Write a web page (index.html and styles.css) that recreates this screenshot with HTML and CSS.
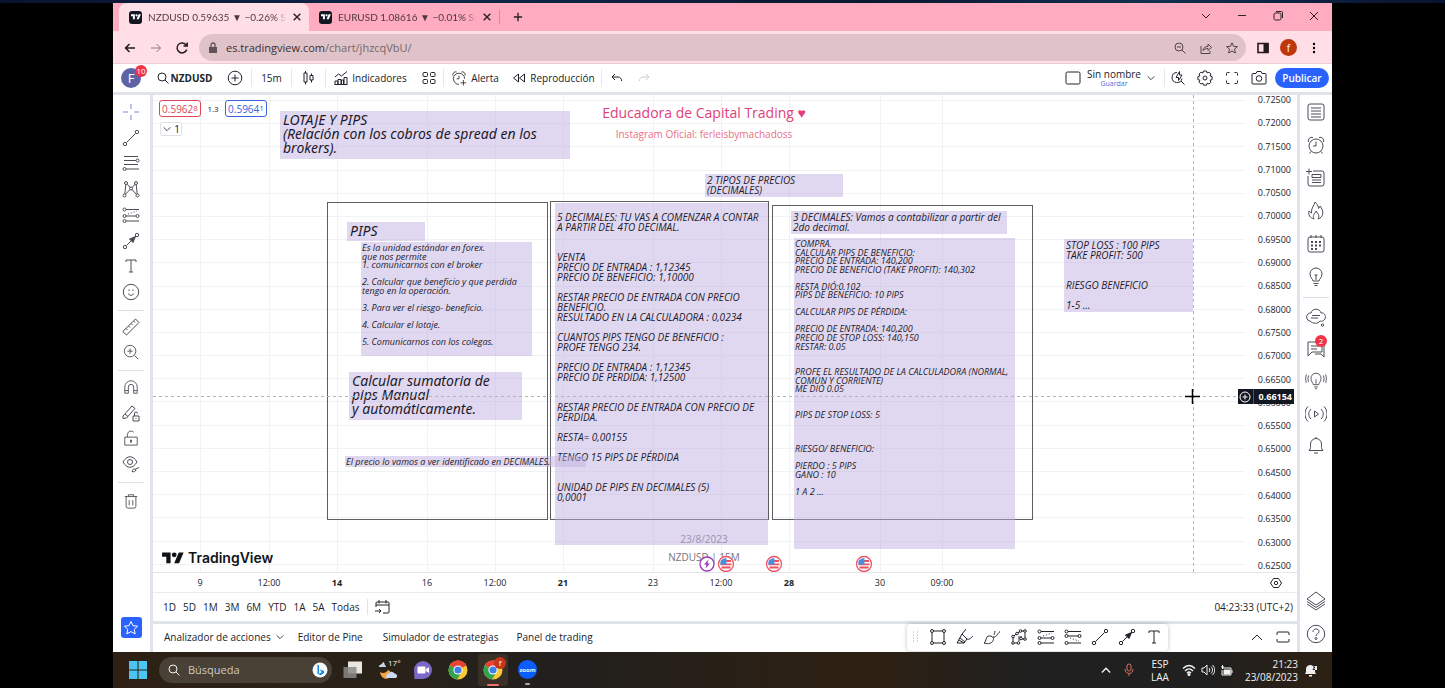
FILE: index.html
```html
<!DOCTYPE html>
<html lang="es">
<head>
<meta charset="utf-8">
<title>NZDUSD 0.59635 ▼ −0.26% Sin nombre</title>
<link rel="stylesheet" href="styles.css">
</head>
<body>
<svg class="defs" aria-hidden="true">
  <symbol id="tv" viewBox="0 0 36 28"><path fill="currentColor" d="M14 22H7V11H0V4h14v18zM28 22h-8l7.500-18h8L28 22z"/><circle cx="20" cy="8" r="4" fill="currentColor"/></symbol>
  <symbol id="x" viewBox="0 0 12 12"><path d="M2 2l8 8M10 2l-8 8"/></symbol>
  <symbol id="down" viewBox="0 0 12 12"><path d="M2 4l4 4 4-4"/></symbol>
  <symbol id="up" viewBox="0 0 12 12"><path d="M1 9l5-5 5 5"/></symbol>
  <symbol id="plus" viewBox="0 0 12 12"><path d="M6 1v10M1 6h10"/></symbol>
  <symbol id="search" viewBox="0 0 12 12"><circle cx="5" cy="5" r="4"/><path d="M8 8l3.500 3.500"/></symbol>
  <symbol id="line" viewBox="0 0 18 18"><circle cx="3" cy="15" r="1.700"/><circle cx="15" cy="3" r="1.700"/><path d="M4.500 13.500l9-9"/></symbol>
  <symbol id="arrow" viewBox="0 0 18 18"><circle cx="3" cy="15" r="1.700"/><circle cx="15" cy="3" r="1.700"/><path d="M4.500 13.500l9-9"/><path d="M13.500 4.500l-6 2.500 3.500 3.500z" fill="currentColor"/></symbol>
  <symbol id="text" viewBox="0 0 18 18"><path d="M4 5V3h10v2M9 3v12M7 15h4"/></symbol>
  <symbol id="longpos" viewBox="0 0 18 18"><circle cx="2.500" cy="3.500" r="1.500"/><path d="M4 3.500h13M4 10h10M4 15h13"/><circle cx="15.500" cy="10" r="1.500"/><circle cx="2.500" cy="10" r="1.500"/><circle cx="2.500" cy="15" r="1.500"/><path d="M6 8l9-3" stroke-dasharray="1 2"/></symbol>
  <symbol id="shortpos" viewBox="0 0 18 18"><circle cx="2.500" cy="3.500" r="1.500"/><path d="M4 3.500h13M4 8h10M4 15h13"/><circle cx="15.500" cy="8" r="1.500"/><circle cx="2.500" cy="8" r="1.500"/><circle cx="2.500" cy="15" r="1.500"/><path d="M6 10l9 3" stroke-dasharray="1 2"/></symbol>
  <symbol id="bulb" viewBox="0 0 20 20"><path d="M7 14c0-2-3-3-3-7a6 6 0 0 1 12 0c0 4-3 5-3 7zM7.500 16.500h5M8.500 18.500h3M10 13V8M8.500 8h3"/></symbol>
  <symbol id="clock" viewBox="0 0 20 20"><circle cx="10" cy="11" r="7"/><path d="M10 6.500V11H7M2.500 7A3.500 3.500 0 0 1 7 2.500M17.500 7A3.500 3.500 0 0 0 13 2.500M5 16.500L3.500 18.500M15 16.500l1.500 2"/></symbol>
  <symbol id="flag" viewBox="0 0 18 18"><circle cx="9" cy="9" r="7.500" fill="#fff" stroke="#ef5362" stroke-width="1.300"/><path d="M4 6h10M3.500 9.300h11M4.500 12.500h9" stroke="#f0505c" stroke-width="1.800"/><path d="M3.300 9.500V7A6 6 0 0 1 9.500 3.200v6.300z" fill="#4a90e2" stroke="none"/></symbol>
  <symbol id="chrome" viewBox="0 0 20 20"><g stroke="none"><circle cx="10" cy="10" r="9.500" fill="#fcc934"/><path d="M10 10L1.800 5.200A9.500 9.500 0 0 1 18.300 5.500z" fill="#e94235"/><path d="M1.800 5.200A9.500 9.500 0 0 0 9 19.500L13.500 12z" fill="#34a350"/><circle cx="10" cy="10" r="4.600" fill="#fff"/><circle cx="10" cy="10" r="3.600" fill="#3f7fe8"/></g></symbol>
</svg>

<div class="wallpaper"></div>
<div class="screen">
  <div class="tabs">
    <div class="tab active"><span class="favicon"><svg><use href="#tv"/></svg></span><span class="tab-title">NZDUSD 0.59635 ▼ −0.26% Sin nombre</span><button aria-label="Cerrar pestaña"><svg class="ic i10 bold"><use href="#x"/></svg></button></div>
    <div class="tab"><span class="favicon"><svg><use href="#tv"/></svg></span><span class="tab-title">EURUSD 1.08616 ▼ −0.01% Sin nombre</span><button aria-label="Cerrar pestaña"><svg class="ic i10 bold"><use href="#x"/></svg></button></div>
    <button class="newtab" aria-label="Nueva pestaña"><svg class="ic i10 bold"><use href="#plus"/></svg></button>
    <div class="winctl">
      <button aria-label="Buscar pestañas"><svg class="ic i12"><use href="#down"/></svg></button>
      <button aria-label="Minimizar"><svg class="ic i12" viewBox="0 0 12 12"><path d="M2 5.500h8"/></svg></button>
      <button aria-label="Restaurar"><svg class="ic i12" viewBox="0 0 12 12"><rect x="2" y="3" width="7" height="7" rx="1.500"/><path d="M4 1.500h5.500a1 1 0 0 1 1 1V8"/></svg></button>
      <button aria-label="Cerrar"><svg class="ic i12"><use href="#x"/></svg></button>
    </div>
  </div>
  <div class="navbar">
    <button aria-label="Atrás"><svg class="ic i12 strong" viewBox="0 0 12 12"><path d="M11 6H1.500M5.500 2l-4 4 4 4"/></svg></button>
    <button class="dim" aria-label="Adelante"><svg class="ic i12" viewBox="0 0 12 12"><path d="M1 6h9.500M6.500 2l4 4-4 4"/></svg></button>
    <button aria-label="Recargar"><svg class="ic i14 strong" viewBox="0 0 14 14"><path d="M11.800 8.500A5 5 0 1 1 11 3.800L12 5M12.200 1.500V5H8.500"/></svg></button>
    <div class="omnibox">
      <svg class="lock" viewBox="0 0 10 12"><path d="M1 5h8v6H1z" fill="#60525a"/><path d="M3 5V3a2 2 0 0 1 4 0v2" fill="none" stroke="#60525a" stroke-width="1.300"/></svg>
      <div class="url"><input id="url" aria-label="Dirección"><label class="url-text" for="url"><b>es.tradingview.com</b>/chart/jhzcqVbU/</label></div>
      <button aria-label="Zoom"><svg class="ic i12" viewBox="0 0 12 12"><circle cx="5" cy="5" r="4"/><path d="M8 8l3.500 3.500M3 5h4"/></svg></button>
      <button aria-label="Compartir"><svg class="ic i12" viewBox="0 0 12 12"><path d="M1 4v7.500h9V9M3 8.500c.5-3 2-4 5-4v-2.500L11.500 5.500 8 8.500v-2C5.500 6.500 4.500 7 3 8.500z"/></svg></button>
      <button aria-label="Favorito"><svg class="ic i12" viewBox="0 0 12 12"><path d="M6 .8l1.600 3.500 3.800.4-2.900 2.500.9 3.800L6 9l-3.400 2 .9-3.800L.6 4.700l3.800-.4z"/></svg></button>
    </div>
    <button aria-label="Panel lateral"><svg class="ic i12" viewBox="0 0 12 12"><path d="M1 1.500h10v9H1z" stroke-width="1.600"/><path d="M7 1.500h4v9H7z" fill="currentColor"/></svg></button>
    <button class="profile">f</button>
    <button aria-label="Menú"><svg class="i12" viewBox="0 0 12 12"><circle cx="6" cy="2" r="1.200"/><circle cx="6" cy="6" r="1.200"/><circle cx="6" cy="10" r="1.200"/></svg></button>
  </div>

  <header class="topbar">
    <div class="tools-left">
      <button class="user">F<span class="badge">10</span></button>
      <button class="symbol"><svg class="ic i12"><use href="#search"/></svg>NZDUSD</button>
      <button aria-label="Comparar"><svg class="ic i16" viewBox="0 0 16 16"><circle cx="8" cy="8" r="6.800"/><path d="M8 4.500v7M4.500 8h7"/></svg></button>
      <button class="sep">15m</button>
      <button class="sep" aria-label="Velas"><svg class="ic i14" viewBox="0 0 14 14"><path d="M3.500 0v2M2 2h3v9H2zM3.500 11v2.500M9.500 2.500v2M8 4.500h3V9H8zM9.500 9v2.500"/></svg></button>
      <button class="sep"><svg class="ic i14" viewBox="0 0 14 14"><path d="M1 13.500V10h3v3.500M4 13V8.500h3V13M7.500 13V9h2v4M10 13V6.500h3V13M.5 13.500h13M1 6l3.500-3 3 2L13 .5"/></svg>Indicadores</button>
      <button aria-label="Plantillas"><svg class="ic i14" viewBox="0 0 14 14"><rect x="1" y="1.500" width="4.500" height="4" rx="1"/><rect x="8.500" y="1.500" width="4.500" height="4" rx="1"/><rect x="1" y="8.500" width="4.500" height="4" rx="1"/><rect x="8.500" y="8.500" width="4.500" height="4" rx="1"/></svg></button>
      <button class="sep"><svg class="ic i16" viewBox="0 0 20 20"><path d="M10 18a7 7 0 1 1 7-7M10 7v4H7M2.500 7A3.500 3.500 0 0 1 7 2.500M17.500 7A3.500 3.500 0 0 0 13 2.500M15.500 12.500v7M12 16h7"/></svg>Alerta</button>
      <button><svg class="ic i14" viewBox="0 0 14 14"><path d="M6.500 3v8L1.500 7zM12.500 3v8L7.500 7z"/></svg>Reproducción</button>
      <button class="sep" aria-label="Deshacer"><svg class="ic i12" viewBox="0 0 12 12"><path d="M4 2L1 5l3 3M1 5h6a3.500 3.500 0 0 1 3.500 4"/></svg></button>
      <button class="faint" aria-label="Rehacer"><svg class="ic i12" viewBox="0 0 12 12"><path d="M8 2l3 3-3 3M11 5H5a3.500 3.500 0 0 0-3.500 4"/></svg></button>
    </div>
    <div class="tools-right">
      <button aria-label="Diseño"><svg class="ic i16" viewBox="0 0 16 16"><rect x="1" y="2" width="14" height="12" rx="1.500"/></svg></button>
      <button class="layout-name"><span>Sin nombre</span><small>Guardar</small></button>
      <button class="more" aria-label="Más"><svg class="ic i10"><use href="#down"/></svg></button>
      <button class="sep" aria-label="Búsqueda rápida"><svg class="ic i14" viewBox="0 0 14 14"><path d="M6 1.500a5 5 0 1 0 5 6M10 10l3.500 3.500M8.500.5L5 6.500h2.500V9.500L11 4H8.500z"/></svg></button>
      <button aria-label="Ajustes"><svg class="ic i16" viewBox="0 0 16 16"><path d="M6.500 1h3l.6 2 2-.8 1.800 1.800-.8 2 2 .6v3l-2 .6.8 2-1.800 1.800-2-.8-.6 2h-3l-.6-2-2 .8-1.800-1.800.8-2-2-.6v-3l2-.6-.8-2 1.800-1.800 2 .8z"/><circle cx="8" cy="8" r="2"/></svg></button>
      <button aria-label="Pantalla completa"><svg class="ic i14" viewBox="0 0 14 14"><path d="M1.500 4.500v-2a1 1 0 0 1 1-1h2M9.500 1.500h2a1 1 0 0 1 1 1v2M12.500 9.500v2a1 1 0 0 1-1 1h-2M4.500 12.500h-2a1 1 0 0 1-1-1v-2"/></svg></button>
      <button aria-label="Captura"><svg class="ic i16" viewBox="0 0 16 16"><path d="M2 3.500h3l1-2h4l1 2h3a1 1 0 0 1 1 1V13a1 1 0 0 1-1 1H2a1 1 0 0 1-1-1V4.500a1 1 0 0 1 1-1z"/><circle cx="8" cy="8.500" r="2.800"/></svg></button>
      <button class="publish">Publicar</button>
    </div>
  </header>

  <div class="workspace">
    <nav class="drawbar">
      <div class="group g8">
        <button class="cross" aria-label="Cursor"><svg class="ic i18" viewBox="0 0 18 18"><path d="M9 1v5M9 12v5M1 9h5M12 9h5"/></svg></button>
        <button aria-label="Línea"><svg class="ic i18"><use href="#line"/></svg></button>
        <button aria-label="Fibonacci"><svg class="ic i18" viewBox="0 0 18 18"><path d="M2 2.500h14M2 6.500h12M2 10.500h14M4 15h13"/><circle cx="15.500" cy="6.500" r="1.500"/><circle cx="2.500" cy="15" r="1.500"/></svg></button>
        <button aria-label="Patrones"><svg class="ic i18" viewBox="0 0 18 18"><circle cx="4" cy="3" r="1.500"/><circle cx="14" cy="3" r="1.500"/><circle cx="9" cy="8.500" r="1.500"/><circle cx="2.500" cy="15.500" r="1.500"/><circle cx="15.500" cy="15.500" r="1.500"/><path d="M3.800 4.500l-1 9.500M5 4.200l3 3M10.200 7.500L13 4.200M14.200 4.500l1 9.500M3.500 14.200L8 9.500M10 9.500l4.500 5"/></svg></button>
        <button aria-label="Predicción"><svg class="ic i18"><use href="#longpos"/></svg></button>
        <button aria-label="Flecha"><svg class="ic i18"><use href="#arrow"/></svg></button>
        <button aria-label="Texto"><svg class="ic i18"><use href="#text"/></svg></button>
        <button aria-label="Iconos"><svg class="ic i18" viewBox="0 0 18 18"><circle cx="9" cy="9" r="7.700"/><path d="M6.500 10.500c.5 2.500 4.500 2.500 5 0M7 6.500v1.500M11 6.500v1.500"/></svg></button>
      </div>
      <div class="group g2">
        <button aria-label="Medir"><svg class="ic i18" viewBox="0 0 18 18"><path d="M.8 13.500L13.500 1 17 4.500 4.500 17zM4 10.500l1.500 1.500M6.500 8L8 9.500M9 5.500L10.500 7M11.500 3L13 4.500"/></svg></button>
        <button aria-label="Acercar"><svg class="ic i16" viewBox="0 0 18 18"><circle cx="8" cy="8" r="6.500"/><path d="M13 13l4 4M8 5v6M5 8h6"/></svg></button>
      </div>
      <div class="group g4">
        <button aria-label="Imán"><svg class="ic i16" viewBox="0 0 18 18"><path d="M2 16V9a7 7 0 0 1 14 0v7h-4V9a3 3 0 0 0-6 0v7zM2 13h4M12 13h4"/></svg></button>
        <button aria-label="Modo dibujo"><svg class="ic i18" viewBox="0 0 18 18"><path d="M1 12L10 2l3 2.500L4.500 14 1 14.500zM3 10l3 2.500M11 12h6v5h-6zM12.500 12V9.500a1.500 1.500 0 0 1 3 0M14 14v1"/></svg></button>
        <button aria-label="Bloquear"><svg class="ic i16" viewBox="0 0 18 18"><path d="M2 8h14v9H2zM5 8V5a4 4 0 0 1 7-2.500"/><path d="M9 11v3" stroke-width="2"/></svg></button>
        <button aria-label="Ocultar"><svg class="ic i18" viewBox="0 0 18 18"><path d="M1 7c4-7 10-7 14 0-4 7-10 7-14 0zM10 16.500c1-3 2-3 4-1.500-1 2-2 2-4 1.500zM13 14.500l4-2"/><circle cx="8" cy="7" r="2.500"/></svg></button>
      </div>
      <div class="group g1">
        <button aria-label="Eliminar"><svg class="ic i16" viewBox="0 0 18 18"><path d="M2 4h14M6 4V2h6v2M3.500 4v11a2 2 0 0 0 2 2h7a2 2 0 0 0 2-2V4M7 8v6M11 8v6"/></svg></button>
      </div>
      <button class="fav" aria-label="Favoritos"><svg class="ic i16" viewBox="0 0 16 16"><path d="M8 1.500l2 4.200 4.600.5-3.400 3.100 1 4.600L8 11.600l-4.200 2.300 1-4.600L1.400 6.200 6 5.700z"/></svg></button>
    </nav>

    <main class="center">
      <section class="chart">
        <div class="plot">
          <div class="hgrid"><i></i><i></i><i></i><i></i><i></i><i></i><i></i><i></i><i></i><i></i><i></i><i></i><i></i><i></i><i></i><i></i><i></i><i></i><i></i><i></i><i></i></div>
          <svg class="vgrid" aria-hidden="true"><path d="M47.500 0v600M116.500 0v600M184.500 0v600M274.500 0v600M342.500 0v600M410.500 0v600M500.500 0v600M568.500 0v600M636.500 0v600M727.500 0v600M789.500 0v600"/></svg>

          <div class="quote"><button class="sell">0.5962<small>8</small></button><span>1.3</span><button class="buy">0.5964<small>1</small></button></div>
          <button class="collapse"><svg class="ic i10"><use href="#down"/></svg>1</button>
          <div class="heading">Educadora de Capital Trading ♥</div>
          <div class="subheading">Instagram Oficial: ferleisbymachadoss</div>
          <div class="stamp date">23/8/2023</div>
          <div class="stamp pair">NZDUSD | 15M</div>

          <div class="box b1"></div><div class="box b2"></div><div class="box b3"></div>

          <div class="note large n-title">LOTAJE Y PIPS
(Relación con los cobros de spread en los
brokers).</div>
          <div class="note large n-pips">PIPS</div>
          <div class="note small n-list">Es la unidad estándar en forex.
que nos permite
1. comunicarnos con el broker

2. Calcular que beneficio y que perdida
tengo en la operación.

3. Para ver el riesgo- beneficio.

4. Calcular el lotaje.

5. Comunicarnos con los colegas.</div>
          <div class="note large n-sum">Calcular sumatoria de
pips Manual
y automáticamente.</div>
          <div class="note medium n-types">2 TIPOS DE PRECIOS
(DECIMALES)</div>
          <div class="note medium n-five">5 DECIMALES: TU VAS A COMENZAR A CONTAR
A PARTIR DEL 4TO DECIMAL.


VENTA
PRECIO DE ENTRADA : 1,12345
PRECIO DE BENEFICIO: 1,10000

RESTAR PRECIO DE ENTRADA CON PRECIO
BENEFICIO.
RESULTADO EN LA CALCULADORA : 0,0234

CUANTOS PIPS TENGO DE BENEFICIO :
PROFE TENGO 234.

PRECIO DE ENTRADA : 1,12345
PRECIO DE PERDIDA: 1,12500


RESTAR PRECIO DE ENTRADA CON PRECIO DE
PÉRDIDA.

RESTA= 0,00155

TENGO 15 PIPS DE PÉRDIDA


UNIDAD DE PIPS EN DECIMALES (5)
0,0001</div>
          <div class="note small n-price">El precio lo vamos a ver identificado en DECIMALES.</div>
          <div class="note medium n-three">3 DECIMALES: Vamos a contabilizar a partir del
2do decimal.</div>
          <div class="note small n-buy">COMPRA.
CALCULAR PIPS DE BENEFICIO:
PRECIO DE ENTRADA: 140,200
PRECIO DE BENEFICIO (TAKE PROFIT): 140,302

RESTA DIÓ:0.102
PIPS DE BENEFICIO: 10 PIPS

CALCULAR PIPS DE PÉRDIDA:

PRECIO DE ENTRADA: 140,200
PRECIO DE STOP LOSS: 140,150
RESTAR: 0.05


PROFE EL RESULTADO DE LA CALCULADORA (NORMAL,
COMÚN Y CORRIENTE)
ME DIÓ 0.05


PIPS DE STOP LOSS: 5



RIESGO/ BENEFICIO:

PIERDO : 5 PIPS
GANO : 10

1 A 2 ...</div>
          <div class="note medium n-stop">STOP LOSS : 100 PIPS
TAKE PROFIT: 500


RIESGO BENEFICIO

1-5 ...</div>

          <div class="brand"><svg><use href="#tv"/></svg>TradingView</div>
          <svg class="event e1" viewBox="0 0 18 18"><circle cx="9" cy="9" r="7" fill="#fff" stroke="#9c36b5" stroke-width="1.300"/><path d="M10.500 4.500L6 9.500h2.500l-1 4L12 8.500H9.500z" fill="#9c36b5"/></svg>
          <svg class="event e2"><use href="#flag"/></svg>
          <svg class="event e3"><use href="#flag"/></svg>
          <svg class="event e4"><use href="#flag"/></svg>
          <svg class="crosshair" aria-hidden="true"><path d="M0 301.500h1200M1040.500 0v600"/></svg>
          <svg class="pointer" viewBox="0 0 15 15"><path d="M7.500 0v15M0 7.500h15" stroke="#000" stroke-width="1.500"/></svg>
        </div>
        <div class="prices"><span>0.72500</span><span>0.72000</span><span>0.71500</span><span>0.71000</span><span>0.70500</span><span>0.70000</span><span>0.69500</span><span>0.69000</span><span>0.68500</span><span>0.68000</span><span>0.67500</span><span>0.67000</span><span>0.66500</span><span>0.66000</span><span>0.65500</span><span>0.65000</span><span>0.64500</span><span>0.64000</span><span>0.63500</span><span>0.63000</span><span>0.62500</span>
          <div class="cursor-price"><button aria-label="Añadir"><svg class="ic i12" viewBox="0 0 12 12"><circle cx="6" cy="6" r="5"/><path d="M6 3.500v5M3.500 6h5"/></svg></button><b>0.66154</b></div>
        </div>
      </section>
      <div class="times">
        <span class="t1">9</span><span class="t2">12:00</span><b class="t3">14</b><span class="t4">16</span><span class="t5">12:00</span><b class="t6">21</b><span class="t7">23</span><span class="t8">12:00</span><b class="t9">28</b><span class="t10">30</span><span class="t11">09:00</span>
        <button aria-label="Ajustes de escala"><svg class="ic i12" viewBox="0 0 12 12"><path d="M3.500 1.500h5L11.500 6l-3 4.500h-5L.5 6z"/><circle cx="6" cy="6" r="1.700"/></svg></button>
      </div>
      <div class="ranges">
        <button>1D</button><button>5D</button><button>1M</button><button>3M</button><button>6M</button><button>YTD</button><button>1A</button><button>5A</button><button>Todas</button>
        <button class="goto" aria-label="Ir a fecha"><svg class="ic i16" viewBox="0 0 16 16"><path d="M2 8V4a1 1 0 0 1 1-1h11a1 1 0 0 1 1 1v9a1 1 0 0 1-1 1h-5M2 6h13M5 1v3.500M12 1v3.500M1 12h6M5 10l2 2-2 2"/></svg></button>
        <button class="utc">04:23:33 (UTC+2)</button>
      </div>
      <footer class="panels">
        <button class="p1">Analizador de acciones <svg class="ic i10"><use href="#down"/></svg></button><button class="p2">Editor de Pine</button><button class="p3">Simulador de estrategias</button><button class="p4">Panel de trading</button>
        <div class="favbar">
          <svg class="grip" viewBox="0 0 8 12"><path d="M1 1h1M5 1h1M1 4h1M5 4h1M1 7h1M5 7h1M1 10h1M5 10h1" stroke="#aaa"/></svg>
          <button aria-label="Rectángulo"><svg class="ic i18" viewBox="0 0 18 18"><path d="M4.500 3h9M4.500 15h9M3 4.500v9M15 4.500v9"/><circle cx="3" cy="3" r="1.500"/><circle cx="15" cy="3" r="1.500"/><circle cx="3" cy="15" r="1.500"/><circle cx="15" cy="15" r="1.500"/></svg></button>
          <button aria-label="Resaltador"><svg class="ic i18" viewBox="0 0 18 18"><path d="M1 15l5-9 5 5-3 4zM6 6l4-5M11 11c2 1 4-1 6-3M4 10l5 4M3 12l5 3"/></svg></button>
          <button aria-label="Pincel"><svg class="ic i18" viewBox="0 0 18 18"><path d="M1 15c3-2 1-7 5.500-7 4 0 5 3 3 5.500S4 16 1 15zM10 9c3 1 4-3 7-5.500M12 3c0 2-1 3-1 4"/></svg></button>
          <button aria-label="Trazo"><svg class="ic i18" viewBox="0 0 18 18"><path d="M3 13.500V9M4 8l2-2M8 5l2-1.500M11.500 3h2.500M15 4.500v5M14 11h-2M11 9.500V8M9 8v5M4.500 15H7"/><circle cx="3" cy="8.500" r="1.300"/><circle cx="7" cy="5.500" r="1.300"/><circle cx="10.500" cy="3" r="1.300"/><circle cx="15" cy="3" r="1.300"/><circle cx="15" cy="11" r="1.300"/><circle cx="11" cy="10.500" r="1.300"/><circle cx="8.500" cy="15" r="1.300"/><circle cx="3" cy="15" r="1.300"/></svg></button>
          <button aria-label="Posición larga"><svg class="ic i18"><use href="#longpos"/></svg></button>
          <button aria-label="Posición corta"><svg class="ic i18"><use href="#shortpos"/></svg></button>
          <button aria-label="Línea"><svg class="ic i18"><use href="#line"/></svg></button>
          <button aria-label="Flecha"><svg class="ic i18"><use href="#arrow"/></svg></button>
          <button aria-label="Texto"><svg class="ic i18"><use href="#text"/></svg></button>
        </div>
        <button aria-label="Abrir panel"><svg class="ic i12"><use href="#up"/></svg></button>
        <button aria-label="Maximizar panel"><svg class="ic i14" viewBox="0 0 14 14"><path d="M1 5V3a1 1 0 0 1 1-1h10a1 1 0 0 1 1 1v2M1 9v2a1 1 0 0 0 1 1h10a1 1 0 0 0 1-1V9"/></svg></button>
      </footer>
    </main>

    <aside class="widgets">
      <div class="group w6">
        <button aria-label="Lista"><svg class="ic i20" viewBox="0 0 20 20"><rect x="2" y="2" width="16" height="16" rx="2"/><path d="M5 6h10M5 9h10M5 12h10M5 15h10"/></svg></button>
        <button aria-label="Alertas"><svg class="ic i20"><use href="#clock"/></svg></button>
        <button aria-label="Noticias"><svg class="ic i20" viewBox="0 0 20 20"><path d="M7 3h9a2 2 0 0 1 2 2v11a2 2 0 0 1-2 2H4a2 2 0 0 1-2-2V8M3 .5v6M0 3.500h6M6 14.500h9M6 12h9M6 6.500h9v3H6z"/></svg></button>
        <button aria-label="Populares"><svg class="ic i20" viewBox="0 0 20 20"><path d="M8 18c-4-1-6-4-5-8 1 1 1.500 1.500 2.500 2C5 7 8 5 9 1c2 2 3.500 4 3.500 6.500 1-.5 1.500-1.500 1.500-2.500 4 5 4 11-2 13 2-4 0-5-2-8-1 3-4 4-2 8z"/></svg></button>
        <button aria-label="Calendario"><svg class="ic i20" viewBox="0 0 20 20"><rect x="2" y="3" width="16" height="15" rx="2"/><path d="M5 1v3M10 1v3M15 1v3"/><path d="M5 8h10M5 11.500h10M5 15h7" stroke-width="2" stroke-dasharray="2 2"/></svg></button>
        <button aria-label="Ideas"><svg class="ic i20"><use href="#bulb"/></svg></button>
      </div>
      <div class="group w5">
        <button aria-label="Chats"><svg class="ic i22" viewBox="0 0 22 20"><path d="M5 14a4 4 0 0 1-2-7c1-1 2-1 3-1 1-5 9-5 10 0 4-1 6 5 3 7-2 2-3 1-4 1-2 3-7 3-10 0zM7 8.500h8M6 11h7"/><circle cx="17.500" cy="18" r="1.200"/></svg></button>
        <button class="has-badge" aria-label="Mensajes"><svg class="ic i20" viewBox="0 0 20 20"><path d="M2 3h14v10H6l-4 4zM5 7h8M5 10h6M18 6v12l-3-3H9"/></svg><span class="badge">2</span></button>
        <button aria-label="Ideas en vivo"><svg class="ic i22" viewBox="0 0 24 20"><path d="M9 14c0-2-2.500-3-2.500-7a5.500 5.500 0 0 1 11 0c0 4-2.500 5-2.500 7zM10 16.500h4M11 18.500h2M12 13V8M4 4c-1 2-1 5 0 7M1.500 3c-1 3-1 6 0 9M20 4c1 2 1 5 0 7M22.500 3c1 3 1 6 0 9"/></svg></button>
        <button aria-label="Emisiones"><svg class="ic i22" viewBox="0 0 22 20"><path d="M9.500 7v6l4-3zM6 5c-3 3-3 7 0 10M3 2.500c-4 4-4 11 0 15M16 5c3 3 3 7 0 10M19 2.500c4 4 4 11 0 15"/></svg></button>
        <button aria-label="Notificaciones"><svg class="ic i20" viewBox="0 0 20 20"><path d="M3 14.500h14c-2-2-1.500-4-1.500-6.500a5.500 5.500 0 0 0-11 0c0 2.500.5 4.500-1.500 6.500zM8 17h4M10 2.500V1"/></svg></button>
      </div>
      <div class="bottom">
        <button aria-label="Capas"><svg class="ic i20" viewBox="0 0 20 20"><path d="M10 1l9 7-9 6-9-6zM1 10.500l9 6 9-6M1 13l9 6 9-6"/></svg></button>
        <button aria-label="Ayuda"><svg class="ic i20" viewBox="0 0 20 20"><circle cx="10" cy="10" r="8.700"/><path d="M7 8c0-4 6-4 6-.5 0 2.500-3 2-3 4.500"/><circle cx="10" cy="14.500" r="1"/></svg></button>
      </div>
    </aside>
  </div>

  <div class="taskbar">
    <button aria-label="Inicio"><svg class="i20" viewBox="0 0 20 20"><path fill="#4cc5f5" d="M1 1h8.500v8.500H1zM10.500 1H19v8.500h-8.500zM1 10.500h8.500V19H1zM10.500 10.500H19V19h-8.500z"/></svg></button>
    <div class="search"><svg class="ic i12"><use href="#search"/></svg><input aria-label="Búsqueda" placeholder="Búsqueda"><svg class="i16" viewBox="0 0 16 16"><circle cx="8" cy="8" r="7.500" fill="#f3fbff"/><path d="M5.500 2.500v9l3 1.800 3.500-2.200V9L8 7.500l1 2 1 .6-3 1.700V3.500z" fill="#1683d8"/></svg></div>
    <div class="apps">
      <button aria-label="Vista de tareas"><svg class="i20" viewBox="0 0 20 20"><path d="M5 1.500h14v12H5z" fill="#e9e6e2"/><path d="M.5 7h13v11H.5z" fill="#8b8885" opacity=".85"/></svg></button>
      <button class="weather" aria-label="Tiempo"><svg class="i20" viewBox="0 0 20 20"><path d="M1 6c1-2 3-1 4-4 2 0 1 3 3 4v1H1z" fill="#cbd5f1"/><path d="M2 12c3 2 6 1 8-2 3 1 4 5 1 8-4 2-8 0-9-6z" fill="#f4a340"/><path d="M8 17c0-3 3-3 4-5 3-1 4 2 6 2 2 2 1 3 0 4H9z" fill="#c8d8f5"/></svg><span>17°</span></button>
      <button aria-label="Chat"><svg class="i20" viewBox="0 0 20 20"><path d="M1 10a9 9 0 1 1 9 9H1.500z" fill="#7b68c8"/><rect x="4.500" y="6.500" width="8" height="7" rx="1" fill="#fff"/><path d="M13 9l3-2v6l-3-2z" fill="#fff"/></svg></button>
      <button aria-label="Chrome"><svg class="i20"><use href="#chrome"/></svg></button>
      <button class="running" aria-label="Chrome, perfil f"><svg class="i20"><use href="#chrome"/></svg><span class="badge">f</span></button>
      <button class="zoom">zoom</button>
    </div>
    <div class="tray">
      <button aria-label="Iconos ocultos"><svg class="ic i10 bold"><use href="#up"/></svg></button>
      <button class="mic" aria-label="Micrófono"><svg class="ic i14" viewBox="0 0 14 14"><rect x="5" y="1" width="4" height="7" rx="2"/><path d="M3 6c0 6 8 6 8 0M7 10.500V13"/></svg></button>
      <button class="lang"><span>ESP</span><span>LAA</span></button>
      <button class="status" aria-label="Red, sonido y batería"><svg class="ic i14 strong" viewBox="0 0 14 14"><path d="M1 5.500c4-4 8-4 12 0M3 8c3-3 5-3 8 0M5 10c1.500-1.500 2.500-1.500 4 0"/><circle cx="7" cy="11.500" r=".8"/></svg><svg class="ic i14" viewBox="0 0 14 14"><path d="M1 5h2l3-3v10L3 9H1zM8 5c1 1 1 3 0 4M10 3.500c2 2 2 5 0 7M11.500 2c3 3 3 7 0 10"/></svg><svg class="ic i14" viewBox="0 0 14 14"><path d="M3 5h8v7H2V7M12 7v3"/><path d="M4 7h6v4H4z" fill="currentColor"/><path d="M1 4h3M2.500 2v4"/></svg></button>
      <button class="clock"><span>21:23</span><span>23/08/2023</span></button>
      <button aria-label="No molestar"><svg class="i14" viewBox="0 0 14 14"><path fill="#eee" d="M1 11l1-2V6c0-4 5-5 7-3h4v4h-2v2l1 2zM5 12h3v1.500H5z"/><path d="M9 4h2L9 6.500h2" fill="none" stroke="#222"/></svg></button>
    </div>
  </div>
</div>
</body>
</html>
```
FILE: styles.css
```css
* { box-sizing: border-box; }
body { margin: 0; height: 100vh; display: flex; flex-direction: column; background: #000; color: #20232b; font-family: "Open Sans", "Noto Sans", sans-serif; font-size: 10px; line-height: 14px; overflow: hidden; }
button { display: flex; align-items: center; justify-content: center; gap: 4px; padding: 0; border: 0; background: none; color: inherit; font: inherit; white-space: nowrap; }
svg { display: block; flex: none; }
.defs { position: absolute; width: 0; height: 0; }
.ic { fill: none; stroke: currentColor; stroke-width: 1; }
.ic.strong { stroke-width: 1.5; }
.ic.bold { stroke-width: 1.7; }
.i10 { width: 10px; height: 10px; }
.i12 { width: 12px; height: 12px; }
.i14 { width: 14px; height: 14px; }
.i16 { width: 16px; height: 16px; }
.i18 { width: 18px; height: 18px; }
.i20 { width: 20px; height: 20px; }
.i22 { width: 22px; height: 20px; }
.badge { position: absolute; display: grid; place-items: center; border-radius: 8px; background: #ef3348; color: #fff; font-size: 8px; line-height: 12px; min-width: 12px; height: 12px; }

.wallpaper { height: 3px; background: linear-gradient(90deg, #0a1230, #10284a 30%, #0a1730 60%, #123050 80%, #0a1230); }
.screen { flex: 1; min-height: 0; margin: 0 113px; display: flex; flex-direction: column; background: #fff; }

.tabs { display: flex; height: 28px; padding-left: 6px; background: #ffabc0; color: #4e3a43; }
.tab { display: flex; align-items: center; gap: 6px; width: 190px; padding: 0 7px 0 10px; border-radius: 8px 8px 0 0; }
.tab.active { background: #ffdfe5; }
.tab button { color: #2e2227; }
.tab-title { flex: 1; overflow: hidden; white-space: nowrap; font-family: Lato, sans-serif; mask-image: linear-gradient(90deg, #000 92%, transparent); }
.favicon { display: grid; place-items: center; width: 13px; height: 13px; border-radius: 3px; background: #131722; color: #fff; }
.favicon svg { width: 10px; height: 8px; }
.newtab { width: 36px; color: #2e2227; }
.tabs .newtab { border-left: 1px solid #d98aa0; height: 14px; align-self: center; }
.winctl { display: flex; margin-left: auto; color: #2e2227; }
.winctl button { width: 36px; padding-bottom: 3px; }

.navbar { display: flex; align-items: center; height: 33px; padding: 1px 5px 0 4px; background: #ffdfe5; border-bottom: 1px solid #e9cdd3; color: #231a1e; }
.navbar button { width: 26px; height: 26px; }
.navbar .dim { color: #8d7b81; }
.omnibox { flex: 1; display: flex; align-items: center; height: 27px; margin: 0 4px; padding: 0 1px 0 9px; border-radius: 14px; background: #dfc3c8; color: #51444a; }
.lock { width: 10px; height: 12px; margin-right: 8px; }
.url { flex: 1; display: grid; font-size: 11px; line-height: 16px; }
.url input, .url-text { grid-area: 1 / 1; }
.url input { width: 100%; border: 0; padding: 0; background: none; font: inherit; }
.url-text { color: #75666c; }
.url-text b { font-weight: 400; color: #3a2f34; }
.navbar .profile { width: 17px; height: 17px; margin: 0 4px; border-radius: 50%; background: #bf360c; color: #fff; }

.topbar { display: flex; justify-content: space-between; height: 31px; border-bottom: 3px solid #e0e3eb; }
.tools-left { display: grid; grid-template-columns: 37px 69px 32px 40px 34px 90px 28px 63px 95px 31px 24px; }
.tools-left, .tools-right { align-items: center; }
.tools-left button, .tools-right button { height: 18px; }
.sep { border-left: 1px solid #e6e8ee; }
.tools-left .symbol { font-weight: 700; gap: 2px; }
.tools-left .user { position: relative; width: 20px; height: 20px; margin-left: 8px; border-radius: 50%; background: #5d64a5; color: #fff; font-size: 13px; }
.user .badge { left: 14px; top: -3px; }
.faint { color: #c9ccd3; }
.tools-right { display: flex; padding-right: 3px; }
.tools-right button { width: 27px; }
.tools-right .layout-name { flex-direction: column; gap: 0; width: 56px; height: 22px; line-height: 11px; }
.tools-right .more { width: 22px; padding-right: 4px; }
.layout-name small { color: #4a6fdc; font-size: 7px; line-height: 8px; }
.tools-right .publish { width: 54px; height: 20px; margin-left: 3px; border-radius: 10px; background: #2962ff; color: #fff; font-weight: 600; }

.workspace { flex: 1; min-height: 0; display: flex; }
.drawbar, .widgets { display: flex; flex-direction: column; align-items: center; color: #4a4d55; }
.drawbar { width: 40px; padding: 4px 1px 14px 0; border-right: 3px solid #e0e3eb; }
.group { display: grid; grid-auto-rows: 1fr; justify-items: stretch; width: 26px; }
.group + .group { border-top: 1px solid #dcdfe6; }
.drawbar .group + .group { padding-top: 3px; }
.g8 { height: 211px; padding-bottom: 5px; }
.g2 { height: 60px; padding-bottom: 5px; }
.g4 { height: 112px; padding-bottom: 5px; }
.g1 { height: 34px; }
.cross { color: #7689dd; }
.fav { width: 21px; height: 21px; margin-top: auto; border-radius: 3px; background: #2962ff; color: #fff; }
.widgets { width: 35px; border-left: 3px solid #e0e3eb; padding-bottom: 2px; }
.w6 { height: 202px; padding-bottom: 3px; }
.w5 { height: 165px; padding-top: 3px; }
.bottom { display: grid; grid-auto-rows: 33px; margin-top: auto; }
.has-badge { position: relative; }
.has-badge .badge { left: 12px; top: 2px; }

.center { flex: 1; min-width: 0; display: flex; flex-direction: column; }
.chart { flex: 1; min-height: 0; display: flex; border-bottom: 1px solid #e3e5ea; }
.plot { position: relative; flex: 1; overflow: hidden; }
.hgrid { display: flex; flex-direction: column; justify-content: space-between; height: 100%; padding: 5px 0 7px; }
.hgrid i { height: 1px; background: #f1f2f4; }
.vgrid, .crosshair { position: absolute; inset: 0; width: 100%; height: 100%; stroke: #f1f2f4; }
.crosshair { stroke: #b4b5bb; stroke-dasharray: 3 3; }
.prices { position: relative; display: flex; flex-direction: column; justify-content: space-between; width: 52px; padding: 0 6px 1px 0; align-items: flex-end; font-size: 9px; line-height: 10px; }
.cursor-price { position: absolute; right: 3px; top: 294px; display: flex; align-items: center; height: 15px; background: #131722; color: #fff; }
.cursor-price button { width: 16px; height: 15px; border-right: 1px solid #555; }
.cursor-price b { padding: 0 2px 0 5px; }

.box { position: absolute; border: 1px solid #5d5d62; }
.b1 { left: 174px; top: 107px; width: 221px; height: 318px; }
.b2 { left: 397px; top: 106px; width: 219px; height: 319px; }
.b3 { left: 619px; top: 110px; width: 261px; height: 315px; }
.note { position: absolute; background: rgba(190, 173, 224, .48); color: #1e1a2b; font-style: italic; white-space: pre; }
.large { padding: 2px 3px; font-family: "Noto Sans", sans-serif; font-size: 14px; line-height: 14px; }
.medium { padding: 1px 2px; font-size: 10px; line-height: 10px; }
.small { padding: 2px 1px 0; font-size: 9px; line-height: .95; }
.n-title { left: 127px; top: 16px; width: 290px; height: 48px; }
.n-pips { left: 194px; top: 127px; width: 78px; height: 19px; }
.n-list { left: 208px; top: 147px; width: 171px; height: 114px; }
.n-sum { left: 196px; top: 277px; width: 173px; height: 48px; }
.n-types { left: 552px; top: 79px; width: 138px; height: 23px; }
.n-five { left: 402px; top: 108px; width: 213px; height: 342px; padding-top: 9px; }
.n-price { left: 192px; top: 361px; width: 241px; height: 11px; }
.n-three { left: 638px; top: 116px; width: 216px; height: 23px; }
.n-buy { left: 641px; top: 143px; width: 221px; height: 311px; }
.n-stop { left: 911px; top: 144px; width: 129px; height: 73px; }

.quote { position: absolute; left: 6px; top: 5px; display: flex; align-items: center; gap: 6px; font-size: 8px; }
.quote span { width: 12px; text-align: center; }
.quote button { width: 42px; height: 17px; gap: 0; border: 1px solid; border-radius: 3px; background: #fff; font-size: 10px; }
.quote small { font-size: 8px; line-height: 14px; align-self: flex-start; }
.sell { color: #e0485a; }
.buy { color: #3b62e0; }
.collapse { position: absolute; left: 7px; top: 27px; width: 22px; height: 14px; gap: 2px; border: 1px solid #dfe1e6; border-radius: 2px; background: #fff; }
.heading, .subheading { position: absolute; left: 551px; transform: translateX(-50%); white-space: nowrap; }
.heading { top: 9px; color: #e0407a; font-size: 14px; line-height: 18px; }
.subheading { top: 32px; color: #ec6e85; }
.stamp { position: absolute; left: 551px; transform: translateX(-50%); color: #77747f; white-space: nowrap; }
.date { top: 437px; }
.pair { top: 455px; }
.brand { position: absolute; left: 9px; top: 453px; display: flex; align-items: center; gap: 4px; color: #10131a; font-family: Inter, sans-serif; font-size: 14px; line-height: 20px; font-weight: 600; }
.brand svg { width: 22px; height: 17px; }
.event { position: absolute; top: 460px; width: 18px; height: 18px; }
.e1 { left: 545px; }
.e2 { left: 564px; }
.e3 { left: 612px; }
.e4 { left: 702px; }
.pointer { position: absolute; left: 1032px; top: 294px; width: 15px; height: 15px; }

.times { position: relative; height: 20px; border-bottom: 1px solid #e9ebef; font-size: 9px; line-height: 20px; }
.times span, .times b { position: absolute; transform: translateX(-50%); }
.t1 { left: 47px; } .t2 { left: 116px; } .t3 { left: 184px; } .t4 { left: 274px; } .t5 { left: 342px; } .t6 { left: 410px; } .t7 { left: 500px; } .t8 { left: 568px; } .t9 { left: 636px; } .t10 { left: 727px; } .t11 { left: 789px; }
.times button { height: 20px; margin: 0 15px 0 auto; }
.ranges { display: flex; align-items: center; height: 31px; padding: 0 4px 0 10px; border-bottom: 3px solid #e0e3eb; gap: 7px; }
.goto { padding-left: 6px; border-left: 1px solid #e0e3eb; }
.utc { margin-left: auto; }
.panels { display: flex; align-items: center; height: 28px; padding: 0 1px 2px 11px; }
.p1 { margin-right: 13px; gap: 4px; }
.p2 { margin-right: 20px; }
.p3 { margin-right: 18px; }
.favbar { display: flex; align-items: center; height: 27px; margin-left: auto; margin-right: 76px; padding: 0 1px 0 5px; border-radius: 4px; background: #fff; box-shadow: 0 0 4px rgba(0, 0, 0, .25); }
.favbar button { width: 27px; }
.panels > .favbar ~ button { width: 26px; }
.grip { width: 8px; height: 12px; margin-right: 4px; }

.taskbar { display: flex; align-items: center; height: 36px; padding: 0 14px 0 15px; background: linear-gradient(90deg, #2e2014, #292219 22%, #211f1d 36%, #2e2112 62%, #202020 75%, #202020 90%, #2d2013); color: #f2f2f2; }
.search { display: flex; align-items: center; width: 173px; height: 26px; margin: 0 6px 0 11px; padding: 0 4px 0 9px; border-radius: 13px; background: #494036; }
.search input { flex: 1; min-width: 0; padding: 0 8px; border: 0; background: none; color: #fff; font: inherit; font-size: 11px; }
.search input::placeholder { color: #cfc9c2; }
.apps { display: flex; gap: 5px; }
.apps button { position: relative; width: 30px; height: 32px; }
.weather span { position: absolute; left: 15px; top: 4px; font-size: 8px; line-height: 9px; }
.running { border-radius: 3px; background: #3a3028; }
.running::after { content: ""; position: absolute; bottom: 0; width: 12px; height: 2px; border-radius: 1px; background: #ef7370; }
.running .badge { left: 16px; top: 3px; background: #c7361c; }
.apps .zoom { width: 19px; height: 19px; margin: 6px 5px; border-radius: 50%; background: #0b5cff; font-size: 6px; font-weight: 700; }
.zoom::after { content: ""; position: absolute; bottom: -6px; width: 5px; height: 2px; border-radius: 1px; background: #aaa; }
.tray { display: flex; align-items: center; gap: 11px; margin-left: auto; line-height: 12px; }
.mic { color: #d9705f; }
.lang, .clock { flex-direction: column; gap: 1px; }
.clock { align-items: flex-end; }
.lang { margin: 0 2px 0 4px; }
.status { gap: 5px; }
.tray > button:last-child { margin-left: -5px; }
```
